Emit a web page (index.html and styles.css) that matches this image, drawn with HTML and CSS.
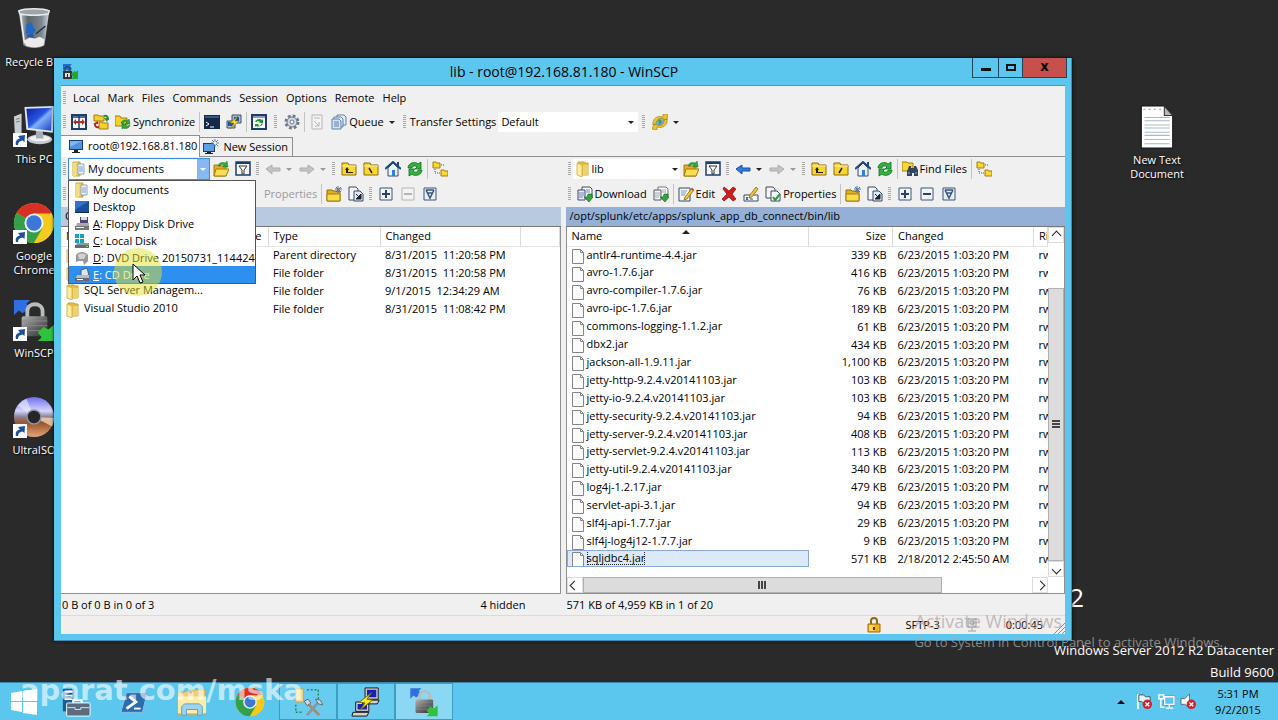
FILE: index.html
```html
<!DOCTYPE html>
<html lang="en">

<head>
    <meta charset="UTF-8">
    <meta name="viewport" content="width=device-width, initial-scale=1.0">
    <title>lib - root@192.168.81.180 - WinSCP</title>
    <link rel="stylesheet" href="styles.css">
</head>

<body>
    <svg class="sprite" aria-hidden="true">
        <defs>
            <linearGradient id="g-screen" x1="0" y1="0" x2="1" y2="1">
                <stop offset="0" stop-color="#0a1fa8"/><stop offset=".45" stop-color="#2a55e0"/><stop offset=".55" stop-color="#7fb0ff"/><stop offset="1" stop-color="#1a3cc0"/>
            </linearGradient>
            <linearGradient id="g-glass" x1="0" y1="0" x2="1" y2="0">
                <stop offset="0" stop-color="#c8d0d4"/><stop offset=".3" stop-color="#5b666c"/><stop offset=".75" stop-color="#7d888e"/><stop offset="1" stop-color="#d2d8da"/>
            </linearGradient>
            <linearGradient id="g-metal" x1="0" y1="0" x2="1" y2="1">
                <stop offset="0" stop-color="#b5b5b5"/><stop offset=".5" stop-color="#6a6a6a"/><stop offset="1" stop-color="#303030"/>
            </linearGradient>
            <linearGradient id="g-disc" x1="0" y1="0" x2="0" y2="1">
                <stop offset="0" stop-color="#6d6fe8"/><stop offset=".35" stop-color="#d4d4ff"/><stop offset=".5" stop-color="#8c8090"/><stop offset=".65" stop-color="#9a5528"/><stop offset="1" stop-color="#e0a67c"/>
            </linearGradient>
            <linearGradient id="g-folder" x1="0" y1="0" x2="1" y2="0">
                <stop offset="0" stop-color="#fff3b0"/><stop offset="1" stop-color="#dfb93c"/>
            </linearGradient>
        </defs>
        <symbol id="i-shortcut" viewBox="0 0 14 14"><rect width="14" height="14" fill="#fff"/><path d="M3 12c-1-4 1-6 4-6.500L5 3l7-1-.500 7L9.500 7.500C7 8 5 9 5 12z" fill="#1c4f9c"/></symbol>
        <symbol id="i-recycle" viewBox="0 0 44 46">
            <path d="M6 4h32l-5 36c-5 4-17 4-22 0z" fill="url(#g-glass)"/>
            <path d="M6 4c6-3 26-3 32 0l-1 3c-6 2-24 2-30 0z" fill="#9da5a8" stroke="#e6eaea" stroke-width="1.500"/>
            <path d="M14 18l6-2 1 5 3 3-4 5-3-2-4 1z" fill="#2367c4"/><path d="M15 29l6-1 1 5-6 1z" fill="#1e5bb8"/><path d="M24 28l10-8" stroke="#2a333a" stroke-width="1.500"/>
            <path d="M12 35l5-3 6 1 5-2 5 3-1 6c-5 3-15 3-19 0z" fill="#eceaea"/><path d="M8 8l4 30" stroke="#eff3f3" stroke-width="1.500"/>
        </symbol>
        <symbol id="i-pc" viewBox="0 0 44 44">
            <path d="M1 12l8-3v22l-7 2z" fill="#c9ced2"/><path d="M3 15l4-1M3 18l4-1" stroke="#70787d"/>
            <ellipse cx="28" cy="36" rx="13" ry="5" fill="#c3cace"/><ellipse cx="28" cy="35" rx="11" ry="3" fill="#eff2f4"/>
            <path d="M24 26h7l1 9h-8z" fill="#a5adb2"/><path d="M12 2l31-1-1 28-28-3z" fill="#dfe5ea"/><path d="M14 4l27-1-1 24-24-3z" fill="url(#g-screen)"/>
        </symbol>
        <symbol id="i-chrome" viewBox="0 0 44 44">
            <circle cx="22" cy="22" r="21" fill="#f3c416"/>
            <path d="M22 22L3.800 11.500A21 21 0 0 1 40.200 11.500z" fill="#d93025"/><path d="M3.800 11.500A21 21 0 0 0 22 43l10-16-10-5z" fill="#34a04a"/>
            <path d="M22 12h18.500A21 21 0 0 1 22 43l9-16z" fill="#f6ca1c"/><circle cx="22" cy="22" r="10" fill="#f2f4f2"/><circle cx="22" cy="22" r="8" fill="#3b78d8"/>
        </symbol>
        <symbol id="i-winscp" viewBox="0 0 44 46">
            <path d="M1 2h17l-4 4 4 4-8 6-4-3-5 5z" fill="#2f6fe0"/>
            <path d="M15 22v-8c0-10 16-10 16 0v8" fill="none" stroke="#b9bcbe" stroke-width="4"/><rect x="9" y="19" width="27" height="21" rx="2" fill="url(#g-metal)"/>
            <path d="M9 24h27M9 29h27M9 34h27" stroke="#8e8e8e" stroke-width=".8"/><path d="M43 45H26l4-4-4-5 6-6 5 3 6-5z" fill="#2fc23a"/>
        </symbol>
        <symbol id="i-disc" viewBox="0 0 44 44"><circle cx="22" cy="22" r="21" fill="url(#g-disc)"/><path d="M22 22L5 10A21 21 0 0 1 14 3z" fill="#eef" opacity=".6"/><path d="M22 22l19 10a21 21 0 0 0 2-9z" fill="#fde2c8" opacity=".7"/><circle cx="22" cy="22" r="8" fill="#8f94a0"/><circle cx="22" cy="22" r="6.500" fill="#26262a"/></symbol>
        <symbol id="i-textfile" viewBox="0 0 32 42"><path d="M1 1h22l8 9v31H1z" fill="#fff" stroke="#111"/><path d="M23 1v9h8z" fill="#b8b8b8" stroke="#333"/><path d="M3 4h17" stroke="#999" stroke-dasharray="2 3"/><path d="M4 12h24M4 15h24M4 19h24M4 22h24M4 26h24M4 29h24M4 33h24M4 37h24" stroke="#a8b8d0"/></symbol>

        <symbol id="i-app" viewBox="0 0 16 16"><path d="M1 0h9L8 2l2 3-3 2-4-2-2 2z" fill="#1f6ad8"/><path d="M3 7V5c0-3 5-3 5 0v2" fill="none" stroke="#444" stroke-width="1.500"/><rect x="1" y="7" width="9" height="8" fill="#333"/><path d="M3 9h5v4H3z" fill="#ddd"/><rect x="5" y="10" width="1" height="3" fill="#222"/><path d="M16 15H9l2-2-2-3 3-3 2 1 2-2z" fill="#25a52e"/></symbol>
        <symbol id="i-compare" viewBox="0 0 16 16"><path d="M1 1h14v14H1z" fill="#fff" stroke="#1d3d70" stroke-width="2"/><path d="M8 1v14M1 3h14" stroke="#1d3d70" stroke-width="1.500"/><path d="M2 8l3-3v2h6V5l3 3-3 3V9H5v2z" fill="#c42020"/></symbol>
        <symbol id="i-syncdirs" viewBox="0 0 16 16"><path d="M1 1h4l1 1h5v5H1zM6 8h3l1 1h5v6H6z" fill="#f5cf2c" stroke="#a47c10"/><path d="M11 2c3-1 4 1 4 4" fill="none" stroke="#27902f" stroke-width="2"/><path d="M11 4h5l-2 4z" fill="#27902f"/><path d="M6 13c-3 1-4-1-4-3" fill="none" stroke="#c42020" stroke-width="2"/><path d="M0 10h5v-3z" fill="#c42020"/></symbol>
        <symbol id="i-sync" viewBox="0 0 16 16"><path d="M0 2h5l1 2h6v8H0z" fill="#f5cf2c" stroke="#a47c10"/><path d="M6 9c1-3 5-4 7-2l1-2 1 5h-5l2-2c-2-1-3 0-4 2zM15 11c-1 4-5 4-7 3l-1 1v-5h4l-1 2c1 1 3 1 4-1z" fill="#31a83a" stroke="#157020" stroke-width=".5"/></symbol>
        <symbol id="i-console" viewBox="0 0 16 16"><path d="M0 1h16v14H0z" fill="#15294a"/><path d="M1 2h14v2H1z" fill="#39577f"/><path d="M2 8l3 2-3 2M6 13h4" fill="none" stroke="#fff"/></symbol>
        <symbol id="i-putty" viewBox="0 0 16 16"><path d="M6 1h9v8H6z" fill="#a9bfd8" stroke="#39516e"/><path d="M8 3h5v4H8z" fill="#1d4fa8"/><path d="M1 7h8v7H1z" fill="#a9bfd8" stroke="#39516e"/><path d="M2 8h6v4H2z" fill="#1d4fa8"/><path d="M12 2L4 9h4l-4 6 9-8H9z" fill="#ffe02a" stroke="#8d7000" stroke-width=".6"/></symbol>
        <symbol id="i-refreshdoc" viewBox="0 0 16 16"><path d="M1 1h14v14H1z" fill="#fff" stroke="#1d3d70" stroke-width="2"/><path d="M1 3h14" stroke="#1d3d70"/><path d="M4 8c1-3 5-4 7-2l1-1v4H8l1-1c-1-1-3-1-3 0zM12 9c-1 4-5 4-7 3l-1 1v-3h4l-1 1c1 1 3 1 3-1z" fill="#259130"/></symbol>
        <symbol id="i-gear" viewBox="0 0 16 16"><circle cx="8" cy="8" r="6" fill="none" stroke="#6e7a8c" stroke-width="3" stroke-dasharray="2.700 2"/><circle cx="8" cy="8" r="5" fill="#d4dae2" stroke="#6e7a8c"/><circle cx="8" cy="8" r="2" fill="#f0f0f0" stroke="#6e7a8c"/></symbol>
        <symbol id="i-queueitem" viewBox="0 0 16 16"><path d="M3 1h10v14H3z" fill="#f4f4f4" stroke="#b5b5b5"/><path d="M5 4h6M5 7l5 5M10 8v4H6" stroke="#b5b5b5" fill="none"/></symbol>
        <symbol id="i-host" viewBox="0 0 16 16"><path d="M4 2h8v8H4z" fill="#e4e4e4" stroke="#9a9a9a"/><path d="M6 4h4v3H6zM8 10v3M4 14h8" fill="none" stroke="#9a9a9a"/></symbol>
        <symbol id="i-queue" viewBox="0 0 16 16"><path d="M6 1h7l2 2v8H6z" fill="#e4eefa" stroke="#5e7fa8"/><path d="M3 3h7l2 2v8H3z" fill="#e4eefa" stroke="#5e7fa8"/><path d="M1 5h7l2 2v8H1z" fill="#d4e4f6" stroke="#5e7fa8"/><path d="M3 8h5M3 10h5M3 12h5" stroke="#5e7fa8"/></symbol>
        <symbol id="i-transfer" viewBox="0 0 16 16"><circle cx="8" cy="8" r="5" fill="#6fb3e8"/><path d="M6 5l3 1 1 3-3 2z" fill="#4d9a52"/><path d="M1 11C0 5 5 1 11 3V0l5 0-1 6-3-1C8 3 4 6 4 10zM15 5c1 6-4 10-10 8v3l-5-1 2-5 3 1c4 2 7-1 7-5z" fill="#f0c22a" stroke="#a07808" stroke-width=".6"/></symbol>
        <symbol id="i-monitor" viewBox="0 0 16 16"><path d="M1 2h14v10H1z" fill="#173d78"/><path d="M2 3h12v8H2z" fill="#4f93df"/><path d="M2 3h12L2 9z" fill="#7db7f0"/><path d="M6 12h4v2H6zM4 14h8v1H4z" fill="#222"/></symbol>
        <symbol id="i-newsession" viewBox="0 0 16 16"><path d="M0 4h12v9H0z" fill="#173d78"/><path d="M1 5h10v7H1z" fill="#5c9fe4"/><path d="M4 13h4v1H4zM2 14h8v1H2z" fill="#222"/><path d="M12 0v8M8 4h8M9 1l6 6M15 1L9 7" stroke="#5f7fa4"/><circle cx="12" cy="4" r="1.500" fill="#fff"/></symbol>
        <symbol id="i-mydocs" viewBox="0 0 16 16"><path d="M2 1h7v14H2z" fill="url(#g-folder)" stroke="#c6a238"/><path d="M7 3h6v10H7z" fill="#f2f7fd" stroke="#8fa3b8"/><path d="M8 6h4M8 8h4M8 10h4" stroke="#6d9cd0"/><path d="M2 2l3 2v12l-3-1z" fill="#f4dd7d"/></symbol>
        <symbol id="i-folder" viewBox="0 0 16 16"><path d="M3 1h6l1 1h3v12H3z" fill="#e0bc46" stroke="#caa437"/><path d="M2 2l5 2v12l-5-2z" fill="#fdeea4" stroke="#d8b850"/><path d="M8 4h5v10H8z" fill="#efd26a"/></symbol>
        <symbol id="i-desktop" viewBox="0 0 16 16"><path d="M1 2h14v12H1z" fill="#1b4f9e"/><path d="M1 2h14L1 11z" fill="#2f72c8"/><path d="M1 13h14v1H1z" fill="#0c2f68"/></symbol>
        <symbol id="i-floppy" viewBox="0 0 16 16"><path d="M6 1h8v7H6z" fill="#4b4878"/><path d="M7 1h6v3H7z" fill="#ddd"/><path d="M3 7h12v6H1z" fill="#aaa"/><path d="M1 10h14v4H1z" fill="#777"/><path d="M2 11h8v1H2z" fill="#eee"/></symbol>
        <symbol id="i-disk" viewBox="0 0 16 16"><path d="M1 1h4v4H1zM6 1h4v4H6zM1 6h4v4H1zM6 6h4v4H6z" fill="#16a2bd"/><path d="M3 10h12v4H1z" fill="#999"/><path d="M1 12h14v3H1z" fill="#667"/><path d="M12 13h2v1h-2z" fill="#5f5"/></symbol>
        <symbol id="i-dvd" viewBox="0 0 16 16"><path d="M2 5c3-4 9-4 12 0v6l-4 4-1-4H5l-3 1z" fill="#999"/><path d="M4 5c2-2 6-2 8 0l-2 4H5z" fill="#d2d2d2"/></symbol>
        <symbol id="i-cd" viewBox="0 0 16 16"><path d="M7 3l6-2 2 7-8 2z" fill="#dce4ee" stroke="#556"/><path d="M3 8h12v5H1z" fill="#bbb"/><path d="M1 11h14v3H1z" fill="#667"/><path d="M3 12h6v1H3z" fill="#fff"/></symbol>
        <symbol id="i-open" viewBox="0 0 16 16"><path d="M1 4h4l1 1h7v10H1z" fill="#e2ae22" stroke="#a47c10"/><path d="M3 8h13l-3 7H1z" fill="#fbdc56" stroke="#a47c10"/><path d="M5 5c1-4 5-4 8-3l1-2 1 6h-5l1-2c-2-1-3 0-4 1z" fill="#31a83a" stroke="#157020" stroke-width=".5"/></symbol>
        <symbol id="i-filter" viewBox="0 0 16 16"><path d="M1 1h14v13H1z" fill="#f7fafd" stroke="#1d3d70" stroke-width="1.500"/><path d="M1 2h14" stroke="#1d3d70" stroke-width="2"/><path d="M4 5h8L9 9v4H7V9z" fill="#fff" stroke="#333"/></symbol>
        <symbol id="i-back" viewBox="0 0 16 16"><path d="M1 8l6-4v3h8v3H7v3z" fill="#2f7de0" stroke="#1550a4"/></symbol>
        <symbol id="i-backoff" viewBox="0 0 16 16"><path d="M1 8l6-4v3h8v3H7v3z" fill="#c4c4c4" stroke="#adadad"/></symbol>
        <symbol id="i-fwdoff" viewBox="0 0 16 16"><path d="M15 8L9 4v3H1v3h8v3z" fill="#c4c4c4" stroke="#adadad"/></symbol>
        <symbol id="i-parent" viewBox="0 0 16 16"><path d="M1 2h6l1 2h7v10H1z" fill="#f9d630" stroke="#8f6b08"/><path d="M1 5h14" stroke="#fff2a0"/><path d="M4 9l2-3 2 3H7v2h5v1H5V9z" fill="#222"/></symbol>
        <symbol id="i-root" viewBox="0 0 16 16"><path d="M1 2h6l1 2h7v10H1z" fill="#f9d630" stroke="#8f6b08"/><path d="M1 5h14" stroke="#fff2a0"/><path d="M6 7l3 5" stroke="#222" stroke-width="1.500"/></symbol>
        <symbol id="i-rootslash" viewBox="0 0 16 16"><path d="M1 2h6l1 2h7v10H1z" fill="#f9d630" stroke="#8f6b08"/><path d="M1 5h14" stroke="#fff2a0"/><path d="M9 7l-3 5" stroke="#222" stroke-width="1.500"/></symbol>
        <symbol id="i-home" viewBox="0 0 16 16"><path d="M3 7v8h10V7L8 2z" fill="#eef3f8" stroke="#334a6c"/><path d="M0 8l8-7 8 7" fill="none" stroke="#1f4688" stroke-width="2"/><path d="M7 9h3v6H7z" fill="#2f80e0"/><path d="M12 1h2v4h-2z" fill="#1f4688"/></symbol>
        <symbol id="i-refresh" viewBox="0 0 16 16"><path d="M1 7c0-5 7-7 10-4l3-2v7H8l2-2c-2-2-5-1-5 1zM15 9c0 5-7 7-10 4l-3 2V8h6l-2 2c2 2 5 1 5-1z" fill="#35b13d" stroke="#12701c" stroke-width=".8"/></symbol>
        <symbol id="i-tree" viewBox="0 0 16 16"><path d="M1 1h3l1 1h3v5H1zM9 9h3l1 1h3v5H9z" fill="#f9d630" stroke="#a47c10"/><path d="M3 8v4h5M9 4h3" fill="none" stroke="#456" stroke-dasharray="1 1"/></symbol>
        <symbol id="i-find" viewBox="0 0 16 16"><path d="M0 1h5l1 1h5v8H0z" fill="#f9d630" stroke="#a47c10"/><path d="M6 8l1-3h2v2h3V5h2l2 4v6h-4v-3h-2v3H5v-5z" fill="#33445c"/><path d="M7 11v2M14 11v2" stroke="#9db4d0"/></symbol>
        <symbol id="i-download" viewBox="0 0 16 16"><path d="M5 1h8l2 2v9H5z" fill="#fff" stroke="#446"/><path d="M1 4h7v10H1z" fill="#e5eefa" stroke="#446"/><path d="M2 7h5M2 9h5M2 11h4M9 4h4M9 6h4" stroke="#6889b4"/><path d="M11 8h4v3h1l-4 5-5-5h3z" fill="#2fa63a" stroke="#12701c" stroke-width=".6"/></symbol>
        <symbol id="i-downloadbg" viewBox="0 0 16 16"><path d="M5 1h8l2 2v9H5z" fill="#fff" stroke="#777"/><path d="M1 4h7v10H1z" fill="#f5f5f5" stroke="#556"/><path d="M2 7h5M2 9h5M2 11h4M9 4h4M9 6h4" stroke="#9ab"/><path d="M11 8h4v3h1l-4 5-5-5h3z" fill="#2fa63a" stroke="#12701c" stroke-width=".6"/></symbol>
        <symbol id="i-edit" viewBox="0 0 16 16"><path d="M1 2h11v13H1z" fill="#f5f8fc" stroke="#334a6c"/><path d="M3 5h6M3 7h5M3 9h4" stroke="#7c98bd"/><path d="M14 2l2 2-7 9-3 1 1-3z" fill="#f3c534" stroke="#7a5a10" stroke-width=".7"/><path d="M14 2l2 2-1 1-2-2z" fill="#d0433a"/></symbol>
        <symbol id="i-delete" viewBox="0 0 16 16"><path d="M3 1l5 4 4-4 3 2-4 5 4 5-3 2-4-4-5 4-2-2 5-5-4-5z" fill="#cf1b1b" stroke="#8c0c0c" stroke-width=".7"/></symbol>
        <symbol id="i-rename" viewBox="0 0 16 16"><path d="M1 9h14v6H1z" fill="#fff" stroke="#334a6c"/><path d="M3 11l2 3M5 11l-2 3M7 13h3" stroke="#334a6c"/><path d="M13 1l2 2-6 8-3 1 1-3z" fill="#f3c534" stroke="#7a5a10" stroke-width=".7"/></symbol>
        <symbol id="i-props" viewBox="0 0 16 16"><path d="M1 1h7l2 2v9H1z" fill="#f5f8fc" stroke="#446"/><path d="M6 5h6l3 3v7H6z" fill="#f5f8fc" stroke="#446"/><path d="M8 11l2 3 5-6" fill="none" stroke="#2c9a36" stroke-width="2"/></symbol>
        <symbol id="i-newfolder" viewBox="0 0 16 16"><path d="M1 4h5l1 1h7v10H1z" fill="#e2ae22" stroke="#8f6b08"/><path d="M1 8h13v7H1z" fill="#fbdc46" stroke="#a47c10"/><path d="M12 0v7M9 3h7M10 1l5 5M15 1l-5 5" stroke="#4f6f9c"/></symbol>
        <symbol id="i-link" viewBox="0 0 16 16"><path d="M1 1h7l2 2v11H1z" fill="#f5f8fc" stroke="#446"/><path d="M6 5h6l3 3v7H6z" fill="#dfe9f5" stroke="#334a6c"/><path d="M8 8l4 4M13 8v5H8z" fill="#222" stroke="#222"/></symbol>
        <symbol id="i-plus" viewBox="0 0 16 16"><path d="M2 2h12v12H2z" fill="#f3f7fc" stroke="#3c5578"/><path d="M8 4v8M4 8h8" stroke="#2c4468" stroke-width="2"/></symbol>
        <symbol id="i-minus" viewBox="0 0 16 16"><path d="M2 2h12v12H2z" fill="#f3f7fc" stroke="#3c5578"/><path d="M4 8h8" stroke="#2c4468" stroke-width="2"/></symbol>
        <symbol id="i-minusoff" viewBox="0 0 16 16"><path d="M2 2h12v12H2z" fill="#f3f3f3" stroke="#b4b4b4"/><path d="M4 8h8" stroke="#b4b4b4" stroke-width="2"/></symbol>
        <symbol id="i-select" viewBox="0 0 16 16"><path d="M2 2h12v12H2z" fill="#e7eff8" stroke="#3c5578"/><path d="M4 4l4 8 4-8M5 7h6M4 4h8" fill="none" stroke="#3c5578" stroke-width="1.500"/></symbol>
        <symbol id="i-file" viewBox="0 0 12 16"><path d="M.500 1.500h8l3 3v11H.500z" fill="#fbfbfb" stroke="#858585"/><path d="M8.500 1.500v3h3" fill="none" stroke="#858585"/></symbol>
        <symbol id="i-lock" viewBox="0 0 14 16"><path d="M4 8V4c0-4 6-4 6 0v4" fill="none" stroke="#8a6a14" stroke-width="2"/><path d="M1 7h12v8H1z" fill="#f0b41c" stroke="#9a6c08"/><path d="M2 8h5v6H2z" fill="#fbd65a"/><path d="M6 10h2v3H6z" fill="#553a00"/></symbol>
        <symbol id="i-resize" viewBox="0 0 12 12"><path d="M1 12L12 1M5 12l7-7M9 12l3-3" stroke="#8c8c8c" fill="none"/></symbol>

        <symbol id="t-start" viewBox="0 0 26 26"><path d="M0 4l11-2v10H0zM12 2l14-2v12H12zM0 13h11v10L0 21zM12 13h14v13l-14-2z" fill="#fff"/></symbol>
        <symbol id="t-server" viewBox="0 0 32 32"><path d="M2 2h12v24H2z" fill="#1c5b93"/><path d="M4 5h8M4 9h8M4 13h8" stroke="#fff" stroke-width="1.500"/><path d="M13 18v-4h9v4" fill="none" stroke="#fff" stroke-width="2"/><rect x="6" y="17" width="25" height="14" rx="1" fill="#5d6c7c" stroke="#fff"/><path d="M7 22h8v2h6v-2h9" stroke="#dfe5ea" fill="none"/></symbol>
        <symbol id="t-ps" viewBox="0 0 32 32"><path d="M8 6h22l-5 21H2z" fill="#2b6cae" stroke="#8fc0e6"/><path d="M11 10l7 6-10 7" fill="none" stroke="#fff" stroke-width="3"/><path d="M16 23h7" stroke="#fff" stroke-width="2"/></symbol>
        <symbol id="t-explorer" viewBox="0 0 32 32"><path d="M1 5h9l2-2h18v26H1z" fill="#efcf6c" stroke="#c9a545"/><path d="M1 10h30v18H1z" fill="#fdebaa"/><path d="M4 4h3v3H4zM12 3h6v2h-6z" fill="#4c9b48"/><path d="M13 4h3v3h-3z" fill="#c44"/><path d="M5 30v-9l3-3h16l3 3v9h-5v-6H10v6z" fill="#9fd3ee" stroke="#5c9dc2"/></symbol>
        <symbol id="t-tools" viewBox="0 0 32 32"><path d="M3 2h8v14H3z" fill="#f4dd93" stroke="#c6a24a"/><path d="M15 3h12v10M3 19v8h8" fill="none" stroke="#238545" stroke-width="1.500" stroke-dasharray="2 2"/><path d="M14 16l14 14" stroke="#b98755" stroke-width="3"/><path d="M28 15L15 30" stroke="#8796a5" stroke-width="3"/><path d="M24 13l5 1 3 5-5-1zM12 15l4-2 3 4-4 3z" fill="#d0d9e2" stroke="#5b6a78"/></symbol>
        <symbol id="t-putty" viewBox="0 0 32 32"><path d="M15 1h14v12H15zM14 14h16l-2 4H12zM5 16h14v10H5zM2 27h17l-2 4H1z" fill="#d6d2c8" stroke="#111"/><path d="M17 3h10v8H17zM7 18h10v6H7z" fill="#1420b8"/><path d="M22 6L9 16l6 1-5 7 13-10-6-1z" fill="#ffe81c" stroke="#7a6c00"/></symbol>
        <symbol id="n-flag" viewBox="0 0 18 18"><path d="M2 1v16" stroke="#fff" stroke-width="2"/><path d="M3 2h5l2 2h5v7H8L6 9H3z" fill="#e7f4fb" stroke="#456"/><circle cx="12" cy="12" r="5" fill="#d8202a"/><path d="M10 10l4 4M14 10l-4 4" stroke="#fff" stroke-width="1.500"/></symbol>
        <symbol id="n-net" viewBox="0 0 18 18"><path d="M6 3h12v10H6z" fill="#246"/><path d="M7 4h10v8H7z" fill="#5bc5ee" stroke="#fff" stroke-width="1.500"/><path d="M8 16h8M12 12v4M1 2h5v4H1zM3 6v9h4" fill="none" stroke="#fff" stroke-width="1.500"/></symbol>
        <symbol id="n-sound" viewBox="0 0 18 18"><path d="M1 6h4l5-5v15l-5-4H1z" fill="#fff" stroke="#567"/><circle cx="12" cy="12" r="5" fill="#d8202a"/><path d="M10 10l4 4M14 10l-4 4" stroke="#fff" stroke-width="1.500"/></symbol>
    </svg>

    <main class="desktop">
        <ul class="desktop-icons">
            <li><svg class="big"><use href="#i-recycle"/></svg><span>Recycle Bin</span></li>
            <li><svg class="big"><use href="#i-pc"/></svg><svg class="arrow"><use href="#i-shortcut"/></svg><span>This PC</span></li>
            <li><svg class="big"><use href="#i-chrome"/></svg><svg class="arrow"><use href="#i-shortcut"/></svg><span>Google Chrome</span></li>
            <li><svg class="big"><use href="#i-winscp"/></svg><svg class="arrow"><use href="#i-shortcut"/></svg><span>WinSCP</span></li>
            <li><svg class="big"><use href="#i-disc"/></svg><svg class="arrow"><use href="#i-shortcut"/></svg><span>UltraISO</span></li>
        </ul>
        <ul class="desktop-icons desktop-icons-right">
            <li><svg class="big"><use href="#i-textfile"/></svg><span>New Text Document</span></li>
        </ul>
        <div class="wallpaper-text">2</div>
        <div class="build">Windows Server 2012 R2 Datacenter<br>Build 9600</div>

        <section class="window">
            <header class="titlebar">
                <svg class="ico"><use href="#i-app"/></svg>
                <h1>lib - root@192.168.81.180 - WinSCP</h1>
                <div class="controls">
                    <button class="min" aria-label="Minimize"><i></i></button>
                    <button class="max" aria-label="Maximize"><i></i></button>
                    <button class="close" aria-label="Close">x</button>
                </div>
            </header>

            <div class="client">
                <nav class="menubar">
                    <i class="grip"></i>
                    <button>Local</button>
                    <button>Mark</button>
                    <button>Files</button>
                    <button>Commands</button>
                    <button>Session</button>
                    <button>Options</button>
                    <button>Remote</button>
                    <button>Help</button>
                </nav>

                <div class="toolbar main-toolbar">
                    <i class="grip"></i>
                    <button class="tool" aria-label="Compare directories"><svg class="ico"><use href="#i-compare"/></svg></button>
                    <button class="tool" aria-label="Synchronize browsing"><svg class="ico"><use href="#i-syncdirs"/></svg></button>
                    <button class="tool wide"><svg class="ico"><use href="#i-sync"/></svg>Synchronize</button>
                    <i class="sep"></i>
                    <button class="tool" aria-label="Open terminal"><svg class="ico"><use href="#i-console"/></svg></button>
                    <button class="tool" aria-label="Open in PuTTY"><svg class="ico"><use href="#i-putty"/></svg></button>
                    <i class="sep"></i>
                    <button class="tool" aria-label="Keep up to date"><svg class="ico"><use href="#i-refreshdoc"/></svg></button>
                    <i class="grip"></i>
                    <button class="tool" aria-label="Preferences"><svg class="ico"><use href="#i-gear"/></svg></button>
                    <i class="sep"></i>
                    <button class="tool" aria-label="Process queue" disabled><svg class="ico"><use href="#i-queueitem"/></svg></button>
                    <button class="tool wide"><svg class="ico"><use href="#i-queue"/></svg>Queue<b class="caret"></b></button>
                    <i class="grip"></i>
                    <label for="transfer">Transfer Settings</label>
                    <div class="combo transfer">
                        <select id="transfer"><option>Default</option></select>
                        <b class="caret"></b>
                    </div>
                    <i class="grip"></i>
                    <button class="tool wide" aria-label="Transfer mode"><svg class="ico"><use href="#i-transfer"/></svg><b class="caret"></b></button>
                </div>

                <div class="tabs">
                    <button class="tab active"><svg class="ico"><use href="#i-monitor"/></svg>root@192.168.81.180</button>
                    <button class="tab"><svg class="ico"><use href="#i-newsession"/></svg>New Session</button>
                </div>

                <div class="panes">
                    <section class="pane local">
                        <div class="toolbar">
                            <i class="grip"></i>
                            <div class="combo open">
                                <svg class="ico"><use href="#i-mydocs"/></svg>
                                <select aria-label="Local drive"><option>My documents</option></select>
                                <b class="caret"></b>
                                <ul class="drives">
                                    <li><svg class="ico"><use href="#i-mydocs"/></svg>My documents</li>
                                    <li><svg class="ico"><use href="#i-desktop"/></svg>Desktop</li>
                                    <li><svg class="ico"><use href="#i-floppy"/></svg><span><u>A</u>: Floppy Disk Drive</span></li>
                                    <li><svg class="ico"><use href="#i-disk"/></svg><span><u>C</u>: Local Disk</span></li>
                                    <li><svg class="ico"><use href="#i-dvd"/></svg><span><u>D</u>: DVD Drive 20150731_114424</span></li>
                                    <li class="hover"><svg class="ico"><use href="#i-cd"/></svg><span><u>E</u>: CD Drive</span></li>
                                </ul>
                            </div>
                            <button class="tool" aria-label="Open directory"><svg class="ico"><use href="#i-open"/></svg></button>
                            <button class="tool" aria-label="Filter"><svg class="ico"><use href="#i-filter"/></svg></button>
                            <i class="grip"></i>
                            <button class="tool wide" aria-label="Back" disabled><svg class="ico"><use href="#i-backoff"/></svg><b class="caret"></b></button>
                            <button class="tool wide" aria-label="Forward" disabled><svg class="ico"><use href="#i-fwdoff"/></svg><b class="caret"></b></button>
                            <i class="grip"></i>
                            <button class="tool" aria-label="Parent directory"><svg class="ico"><use href="#i-parent"/></svg></button>
                            <button class="tool" aria-label="Root directory"><svg class="ico"><use href="#i-root"/></svg></button>
                            <button class="tool" aria-label="Home directory"><svg class="ico"><use href="#i-home"/></svg></button>
                            <button class="tool" aria-label="Refresh"><svg class="ico"><use href="#i-refresh"/></svg></button>
                            <i class="sep"></i>
                            <button class="tool" aria-label="Tree"><svg class="ico"><use href="#i-tree"/></svg></button>
                        </div>
                        <div class="toolbar actions">
                            <i class="grip"></i>
                            <button class="tool wide props" disabled>Properties</button>
                            <i class="sep"></i>
                            <button class="tool" aria-label="New directory"><svg class="ico"><use href="#i-newfolder"/></svg></button>
                            <button class="tool" aria-label="Add link"><svg class="ico"><use href="#i-link"/></svg></button>
                            <i class="grip"></i>
                            <button class="tool" aria-label="Select"><svg class="ico"><use href="#i-plus"/></svg></button>
                            <button class="tool" aria-label="Unselect" disabled><svg class="ico"><use href="#i-minusoff"/></svg></button>
                            <button class="tool" aria-label="Select all"><svg class="ico"><use href="#i-select"/></svg></button>
                        </div>
                        <div class="path">C:\</div>
                        <div class="list">
                            <table>
                                <colgroup><col class="c-name"><col class="c-size"><col class="c-type"><col class="c-changed"><col></colgroup>
                                <thead>
                                    <tr><th>Name</th><th class="num">Size</th><th>Type</th><th>Changed</th><th></th></tr>
                                </thead>
                                <tbody>
                                    <tr><td><svg class="ico"><use href="#i-folder"/></svg>..</td><td></td><td>Parent directory</td><td>8/31/2015&nbsp; 11:20:58 PM</td><td></td></tr>
                                    <tr><td><svg class="ico"><use href="#i-folder"/></svg></td><td></td><td>File folder</td><td>8/31/2015&nbsp; 11:20:58 PM</td><td></td></tr>
                                    <tr><td><svg class="ico"><use href="#i-folder"/></svg>SQL Server Managem...</td><td></td><td>File folder</td><td>9/1/2015&nbsp; 12:34:29 AM</td><td></td></tr>
                                    <tr><td><svg class="ico"><use href="#i-folder"/></svg>Visual Studio 2010</td><td></td><td>File folder</td><td>8/31/2015&nbsp; 11:08:42 PM</td><td></td></tr>
                                </tbody>
                            </table>
                        </div>
                        <div class="summary"><span>0 B of 0 B in 0 of 3</span><span>4 hidden</span></div>
                    </section>

                    <section class="pane remote">
                        <div class="toolbar">
                            <i class="grip"></i>
                            <div class="combo">
                                <svg class="ico"><use href="#i-folder"/></svg>
                                <select aria-label="Remote directory"><option>lib</option></select>
                                <b class="caret"></b>
                            </div>
                            <button class="tool" aria-label="Open directory"><svg class="ico"><use href="#i-open"/></svg></button>
                            <button class="tool" aria-label="Filter"><svg class="ico"><use href="#i-filter"/></svg></button>
                            <i class="grip"></i>
                            <button class="tool wide" aria-label="Back"><svg class="ico"><use href="#i-back"/></svg><b class="caret"></b></button>
                            <button class="tool wide" aria-label="Forward" disabled><svg class="ico"><use href="#i-fwdoff"/></svg><b class="caret"></b></button>
                            <i class="grip"></i>
                            <button class="tool" aria-label="Parent directory"><svg class="ico"><use href="#i-parent"/></svg></button>
                            <button class="tool" aria-label="Root directory"><svg class="ico"><use href="#i-rootslash"/></svg></button>
                            <button class="tool" aria-label="Home directory"><svg class="ico"><use href="#i-home"/></svg></button>
                            <button class="tool" aria-label="Refresh"><svg class="ico"><use href="#i-refresh"/></svg></button>
                            <i class="sep"></i>
                            <button class="tool wide"><svg class="ico"><use href="#i-find"/></svg>Find Files</button>
                            <i class="sep"></i>
                            <button class="tool" aria-label="Tree"><svg class="ico"><use href="#i-tree"/></svg></button>
                        </div>
                        <div class="toolbar actions">
                            <i class="grip"></i>
                            <button class="tool wide"><svg class="ico"><use href="#i-download"/></svg>Download</button>
                            <button class="tool" aria-label="Download in background"><svg class="ico"><use href="#i-downloadbg"/></svg></button>
                            <i class="sep"></i>
                            <button class="tool wide"><svg class="ico"><use href="#i-edit"/></svg>Edit</button>
                            <button class="tool" aria-label="Delete"><svg class="ico"><use href="#i-delete"/></svg></button>
                            <button class="tool" aria-label="Rename"><svg class="ico"><use href="#i-rename"/></svg></button>
                            <button class="tool wide"><svg class="ico"><use href="#i-props"/></svg>Properties</button>
                            <i class="sep"></i>
                            <button class="tool" aria-label="New directory"><svg class="ico"><use href="#i-newfolder"/></svg></button>
                            <button class="tool" aria-label="Add link"><svg class="ico"><use href="#i-link"/></svg></button>
                            <i class="grip"></i>
                            <button class="tool" aria-label="Select"><svg class="ico"><use href="#i-plus"/></svg></button>
                            <button class="tool" aria-label="Unselect"><svg class="ico"><use href="#i-minus"/></svg></button>
                            <button class="tool" aria-label="Select all"><svg class="ico"><use href="#i-select"/></svg></button>
                        </div>
                        <div class="path">/opt/splunk/etc/apps/splunk_app_db_connect/bin/lib</div>
                        <div class="list scrolled">
                            <div class="files">
                                <table>
                                    <colgroup><col class="c-name"><col class="c-size"><col class="c-changed"><col></colgroup>
                                    <thead>
                                        <tr><th class="sorted">Name</th><th class="num">Size</th><th>Changed</th><th>Rights</th></tr>
                                    </thead>
                                    <tbody>
                                        <tr><td><svg class="file"><use href="#i-file"/></svg><span>antlr4-runtime-4.4.jar</span></td><td class="num">339 KB</td><td>6/23/2015 1:03:20 PM</td><td>rw-r--r--</td></tr>
                                        <tr><td><svg class="file"><use href="#i-file"/></svg><span>avro-1.7.6.jar</span></td><td class="num">416 KB</td><td>6/23/2015 1:03:20 PM</td><td>rw-r--r--</td></tr>
                                        <tr><td><svg class="file"><use href="#i-file"/></svg><span>avro-compiler-1.7.6.jar</span></td><td class="num">76 KB</td><td>6/23/2015 1:03:20 PM</td><td>rw-r--r--</td></tr>
                                        <tr><td><svg class="file"><use href="#i-file"/></svg><span>avro-ipc-1.7.6.jar</span></td><td class="num">189 KB</td><td>6/23/2015 1:03:20 PM</td><td>rw-r--r--</td></tr>
                                        <tr><td><svg class="file"><use href="#i-file"/></svg><span>commons-logging-1.1.2.jar</span></td><td class="num">61 KB</td><td>6/23/2015 1:03:20 PM</td><td>rw-r--r--</td></tr>
                                        <tr><td><svg class="file"><use href="#i-file"/></svg><span>dbx2.jar</span></td><td class="num">434 KB</td><td>6/23/2015 1:03:20 PM</td><td>rw-r--r--</td></tr>
                                        <tr><td><svg class="file"><use href="#i-file"/></svg><span>jackson-all-1.9.11.jar</span></td><td class="num">1,100 KB</td><td>6/23/2015 1:03:20 PM</td><td>rw-r--r--</td></tr>
                                        <tr><td><svg class="file"><use href="#i-file"/></svg><span>jetty-http-9.2.4.v20141103.jar</span></td><td class="num">103 KB</td><td>6/23/2015 1:03:20 PM</td><td>rw-r--r--</td></tr>
                                        <tr><td><svg class="file"><use href="#i-file"/></svg><span>jetty-io-9.2.4.v20141103.jar</span></td><td class="num">103 KB</td><td>6/23/2015 1:03:20 PM</td><td>rw-r--r--</td></tr>
                                        <tr><td><svg class="file"><use href="#i-file"/></svg><span>jetty-security-9.2.4.v20141103.jar</span></td><td class="num">94 KB</td><td>6/23/2015 1:03:20 PM</td><td>rw-r--r--</td></tr>
                                        <tr><td><svg class="file"><use href="#i-file"/></svg><span>jetty-server-9.2.4.v20141103.jar</span></td><td class="num">408 KB</td><td>6/23/2015 1:03:20 PM</td><td>rw-r--r--</td></tr>
                                        <tr><td><svg class="file"><use href="#i-file"/></svg><span>jetty-servlet-9.2.4.v20141103.jar</span></td><td class="num">113 KB</td><td>6/23/2015 1:03:20 PM</td><td>rw-r--r--</td></tr>
                                        <tr><td><svg class="file"><use href="#i-file"/></svg><span>jetty-util-9.2.4.v20141103.jar</span></td><td class="num">340 KB</td><td>6/23/2015 1:03:20 PM</td><td>rw-r--r--</td></tr>
                                        <tr><td><svg class="file"><use href="#i-file"/></svg><span>log4j-1.2.17.jar</span></td><td class="num">479 KB</td><td>6/23/2015 1:03:20 PM</td><td>rw-r--r--</td></tr>
                                        <tr><td><svg class="file"><use href="#i-file"/></svg><span>servlet-api-3.1.jar</span></td><td class="num">94 KB</td><td>6/23/2015 1:03:20 PM</td><td>rw-r--r--</td></tr>
                                        <tr><td><svg class="file"><use href="#i-file"/></svg><span>slf4j-api-1.7.7.jar</span></td><td class="num">29 KB</td><td>6/23/2015 1:03:20 PM</td><td>rw-r--r--</td></tr>
                                        <tr><td><svg class="file"><use href="#i-file"/></svg><span>slf4j-log4j12-1.7.7.jar</span></td><td class="num">9 KB</td><td>6/23/2015 1:03:20 PM</td><td>rw-r--r--</td></tr>
                                        <tr class="selected"><td><svg class="file"><use href="#i-file"/></svg><span>sqljdbc4.jar</span></td><td class="num">571 KB</td><td>2/18/2012 2:45:50 AM</td><td>rw-r--r--</td></tr>
                                    </tbody>
                                </table>
                            </div>
                            <div class="vscroll">
                                <button class="up" aria-label="Scroll up"></button>
                                <div class="track"><div class="thumb"></div></div>
                                <button class="down" aria-label="Scroll down"></button>
                            </div>
                            <div class="hscroll">
                                <button class="left" aria-label="Scroll left"></button>
                                <div class="track"><div class="thumb"></div></div>
                                <button class="right" aria-label="Scroll right"></button>
                            </div>
                        </div>
                        <div class="summary"><span>571 KB of 4,959 KB in 1 of 20</span></div>
                    </section>
                </div>

                <footer class="statusbar">
                    <svg class="ico"><use href="#i-lock"/></svg>
                    <span class="protocol">SFTP-3</span>
                    <svg class="ico"><use href="#i-host"/></svg>
                    <span class="elapsed">0:00:45</span>
                    <svg class="resize"><use href="#i-resize"/></svg>
                </footer>
            </div>
        </section>

        <div class="halo"></div>
        <svg class="cursor" viewBox="0 0 13 21"><path d="M1 1v16l4-4 3 7 3-1-3-7h5z" fill="#fff" stroke="#000"/></svg>
        <div class="activate"><strong>Activate Windows</strong>Go to System in Control Panel to activate Windows.</div>
    </main>

    <footer class="taskbar">
        <button class="start" aria-label="Start"><svg><use href="#t-start"/></svg></button>
        <button aria-label="Server Manager"><svg><use href="#t-server"/></svg></button>
        <button aria-label="PowerShell"><svg><use href="#t-ps"/></svg></button>
        <button aria-label="File Explorer"><svg><use href="#t-explorer"/></svg></button>
        <button aria-label="Chrome"><svg><use href="#i-chrome"/></svg></button>
        <button class="running" aria-label="SQL tools"><svg><use href="#t-tools"/></svg></button>
        <button class="running" aria-label="PuTTY"><svg><use href="#t-putty"/></svg></button>
        <button class="running current" aria-label="WinSCP"><svg><use href="#i-winscp"/></svg></button>
        <div class="tray">
            <b class="caret up"></b>
            <svg><use href="#n-flag"/></svg>
            <svg><use href="#n-net"/></svg>
            <svg><use href="#n-sound"/></svg>
            <div class="clock">5:31 PM<br>9/2/2015</div>
        </div>
        <div class="watermark">aparat.com/mska</div>
    </footer>
</body>

</html>
```

FILE: styles.css
```css
:root {
    --sky: #5bc7ee;
    --face: #f0f0f0;
    --desktop: #2a2a2b;
    --line: #8e8f93;
    --text: #000;
}

* {
    margin: 0;
    padding: 0;
    box-sizing: border-box;
}

body {
    display: flex;
    flex-direction: column;
    height: 100vh;
    overflow: hidden;
    background: var(--desktop);
    color: var(--text);
    font-family: "Open Sans", "Noto Sans", sans-serif;
    font-size: 11px;
    line-height: 18px;
}

button,
select {
    border: none;
    background: none;
    color: inherit;
    font: inherit;
    white-space: nowrap;
}

ul {
    list-style: none;
}

.sprite {
    position: absolute;
    width: 0;
    height: 0;
}

.ico {
    flex: none;
    width: 16px;
    height: 16px;
}

/* desktop */
.desktop {
    position: relative;
    flex: 1;
    min-height: 0;
}

.desktop-icons {
    position: absolute;
    left: 0;
    top: 7px;
    width: 68px;
    color: #fff;
    line-height: 14px;
    text-align: center;
    text-shadow: 1px 1px 2px #000;
}

.desktop-icons li {
    position: relative;
    display: flex;
    flex-direction: column;
    align-items: center;
    gap: 4px;
    height: 97px;
}

.desktop-icons .big {
    width: 42px;
    height: 44px;
}

.desktop-icons .arrow {
    position: absolute;
    left: 13px;
    top: 29px;
    width: 14px;
    height: 14px;
}

.desktop-icons-right {
    left: auto;
    right: 87px;
    top: 105px;
}

.wallpaper-text {
    position: absolute;
    right: 194px;
    bottom: 67px;
    color: #fff;
    font-size: 26px;
    line-height: 36px;
}

.build {
    position: absolute;
    right: 4px;
    bottom: -1px;
    color: #fff;
    font-size: 13px;
    line-height: 22px;
    text-align: right;
}

.activate {
    position: absolute;
    right: 55px;
    bottom: 31px;
    color: rgba(170, 170, 170, 0.75);
    font-size: 13px;
    line-height: 18px;
    white-space: nowrap;
}

.activate strong {
    display: block;
    font-size: 18px;
    font-weight: 400;
    line-height: 24px;
}

/* window */
.window {
    position: absolute;
    left: 54px;
    right: 206px;
    top: 58px;
    bottom: 41px;
    display: flex;
    flex-direction: column;
    padding: 0 6px 6px 7px;
    background: var(--sky);
    border: 1px solid #3b8fb4;
    border-width: 0 1px 1px 0;
    box-shadow: 0 0 3px #000;
}

.titlebar {
    display: grid;
    grid-template-columns: 1fr auto 1fr;
    align-items: center;
    height: 27px;
    margin-right: -2px;
}

.titlebar .ico {
    margin-left: 1px;
}

.titlebar h1 {
    font-size: 14px;
    font-weight: 400;
}

.controls {
    display: flex;
    align-self: start;
    justify-self: end;
    height: 20px;
    border: 1px solid #23455a;
    border-top: none;
}

.controls button {
    display: flex;
    align-items: center;
    justify-content: center;
    border-right: 1px solid #23455a;
}

.controls .min {
    width: 26px;
}

.controls .min i {
    width: 10px;
    height: 3px;
    margin-top: 3px;
    background: #111;
}

.controls .max {
    width: 24px;
}

.controls .max i {
    width: 10px;
    height: 7px;
    border: 2px solid #111;
}

.controls .close {
    width: 43px;
    padding-bottom: 3px;
    border-right: none;
    background: #c8504c;
    font-size: 14px;
    font-weight: 700;
}

.client {
    display: flex;
    flex: 1;
    flex-direction: column;
    min-height: 0;
    background: var(--face);
    border-top: 1px solid #4c94b8;
}

.menubar {
    display: flex;
    align-items: center;
    height: 24px;
}

.menubar button {
    padding: 0 4px;
}

.toolbar {
    display: flex;
    align-items: center;
    height: 24px;
}

.toolbar.actions {
    height: 26px;
}

.grip {
    flex: none;
    width: 3px;
    height: 14px;
    margin: 0 3px 0 2px;
    background: repeating-linear-gradient(#a8a8a8 0 1px, transparent 1px 2px);
}

.sep {
    flex: none;
    width: 1px;
    height: 20px;
    margin: 0 1px;
    background: #c3c3c3;
}

.tool {
    display: flex;
    flex: none;
    align-items: center;
    justify-content: center;
    width: 22px;
    height: 22px;
}

.tool.wide {
    gap: 2px;
    width: auto;
    padding: 0 3px;
}

.tool:disabled {
    color: #9a9a9a;
}

.tool .caret {
    margin: 0 1px 0 3px;
}

.caret {
    flex: none;
    border: 3px solid transparent;
    border-top-color: #222;
    border-bottom: none;
}

.tool:disabled .caret {
    border-top-color: #999;
}

.caret.up {
    border: 4px solid transparent;
    border-top: none;
    border-bottom-color: #111;
}

.main-toolbar .grip {
    margin: 0 4px;
}

.main-toolbar .grip:first-child {
    margin: 0 2px;
}

.combo {
    position: relative;
    display: flex;
    flex: none;
    align-items: center;
    width: 107px;
    height: 20px;
    margin-left: -1px;
    padding: 0 2px;
    background: #fff;
}

.combo select {
    flex: 1;
    min-width: 0;
    height: 18px;
    padding-left: 1px;
    appearance: none;
    outline: none;
}

.combo.transfer {
    width: 140px;
    margin-left: 2px;
    padding-right: 4px;
}

.combo.open {
    width: 142px;
    height: 22px;
    padding-right: 0;
    border: 1px solid #3a8de0;
}

.combo.open > .caret {
    align-self: stretch;
    display: flex;
    align-items: center;
    width: 12px;
    border: none;
    background: #86b9f2;
}

.combo.open > .caret::before {
    content: "";
    margin-left: 3px;
    border: 3px solid transparent;
    border-top-color: #fff;
    border-bottom: none;
}

.drives {
    position: absolute;
    left: -1px;
    top: 21px;
    z-index: 2;
    width: 188px;
    background: #fff;
    border: 1px solid #555;
}

.drives li {
    display: flex;
    align-items: center;
    gap: 3px;
    height: 17px;
    padding-left: 5px;
    white-space: nowrap;
}

.drives .hover {
    background: #2d8fef;
    color: #fff;
}

/* session tabs */
.tabs {
    display: flex;
    align-items: flex-end;
    height: 23px;
    border-bottom: 1px solid var(--line);
}

.tab {
    display: flex;
    align-items: center;
    gap: 4px;
    height: 19px;
    padding: 0 4px 0 3px;
    border: 1px solid var(--line);
    border-width: 1px 1px 0 0;
}

.tab.active {
    height: 22px;
    margin-bottom: -1px;
    padding: 0 2px 2px 7px;
    background: #fff;
}

/* panes */
.panes {
    display: grid;
    grid-template-columns: 1fr 1fr;
    gap: 5px;
    flex: 1;
    min-height: 0;
}

.pane {
    display: flex;
    flex-direction: column;
    min-width: 0;
    min-height: 0;
}

.props {
    margin-left: 192px;
}

.path {
    height: 20px;
    padding: 0 4px;
    border-bottom: 1px solid #777;
    background: #b8cadd;
}

.remote .path {
    background: #94b0d6;
}

.list {
    flex: 1;
    min-height: 0;
    overflow: hidden;
    background: #fff;
    border: 1px solid var(--line);
    border-top: none;
}

.local .list {
    border-left: none;
}

.list table {
    width: 100%;
    table-layout: fixed;
    border-collapse: collapse;
}

.list th,
.list td {
    height: 18px;
    padding-left: 5px;
    overflow: hidden;
    font-weight: 400;
    text-align: left;
    white-space: nowrap;
    line-height: 16px;
}

.list th {
    height: 19px;
    border-right: 1px solid #ddd;
    border-bottom: 1px solid #e4e4e4;
}

.list tr:nth-child(6n) td {
    height: 17px;
}

.list .num {
    padding-right: 6px;
    text-align: right;
}

.list td svg {
    margin-right: 3px;
    vertical-align: middle;
}

.list td .file {
    width: 12px;
    height: 16px;
}

.local .c-name {
    width: 147px;
}

.local .c-size {
    width: 60px;
}

.local .c-type {
    width: 112px;
}

.local .c-changed {
    width: 140px;
}

.local td:first-child {
    padding-left: 4px;
}

.remote .c-name {
    width: 242px;
}

.remote .c-size {
    width: 84px;
}

.remote .c-changed {
    width: 141px;
}

.sorted {
    position: relative;
}

.sorted::after {
    content: "";
    position: absolute;
    left: 48%;
    top: 3px;
    border: 4px solid transparent;
    border-top: none;
    border-bottom-color: #222;
}

.selected td:first-child {
    background: #dce9fa;
    outline: 1px solid #88a8d8;
    outline-offset: -1px;
}

.selected td:first-child span {
    outline: 1px dotted #222;
    outline-offset: -1px;
}

.scrolled {
    display: grid;
    grid-template-columns: 1fr 16px;
    grid-template-rows: 1fr 16px;
}

.files {
    min-width: 0;
    min-height: 0;
    overflow: hidden;
}

.vscroll,
.hscroll {
    display: flex;
    background: #fff;
}

.vscroll {
    flex-direction: column;
}

.vscroll button,
.hscroll button {
    display: flex;
    align-items: center;
    justify-content: center;
    width: 16px;
    height: 16px;
    border: 1px solid #ddd;
}

.vscroll button::before,
.hscroll button::before {
    content: "";
    width: 6px;
    height: 6px;
    border: 1px solid #222;
    border-width: 1px 0 0 1px;
    transform: rotate(45deg);
}

.vscroll .down::before {
    transform: rotate(225deg);
}

.hscroll .left::before {
    transform: rotate(-45deg);
}

.hscroll .right::before {
    transform: rotate(135deg);
}

.track {
    display: flex;
    flex: 1;
}

.thumb {
    display: flex;
    align-items: center;
    justify-content: center;
    background: #dcdcdc;
    border: 1px solid #b0b0b0;
}

.thumb::before {
    content: "";
    width: 8px;
    height: 8px;
}

.vscroll .track {
    align-items: flex-end;
}

.vscroll .thumb {
    width: 100%;
    height: 86%;
}

.vscroll .thumb::before {
    background: repeating-linear-gradient(#444 0 2px, transparent 2px 3px);
}

.hscroll .thumb {
    width: 80%;
}

.hscroll .thumb::before {
    background: repeating-linear-gradient(90deg, #444 0 2px, transparent 2px 3px);
}

.summary {
    display: flex;
    justify-content: space-between;
    align-items: center;
    height: 21px;
    padding: 0 35px 0 1px;
}

.statusbar {
    display: flex;
    align-items: center;
    justify-content: flex-end;
    height: 19px;
    border-top: 1px solid #dadada;
    background: #f2eeee;
}

.protocol {
    margin: 0 24px;
}

.elapsed {
    margin: 0 10px 0 26px;
}

.resize {
    align-self: flex-end;
    width: 12px;
    height: 12px;
}

/* pointer */
.halo {
    position: absolute;
    left: 114px;
    top: 248px;
    z-index: 3;
    width: 48px;
    height: 48px;
    border-radius: 50%;
    background: rgba(226, 226, 50, 0.5);
}

.cursor {
    position: absolute;
    left: 132px;
    top: 263px;
    z-index: 3;
    width: 13px;
    height: 21px;
}

/* taskbar */
.taskbar {
    position: relative;
    display: flex;
    height: 38px;
    background: var(--sky);
    border-top: 1px solid #3a86aa;
}

.taskbar button {
    display: flex;
    align-items: center;
    justify-content: center;
    width: 58px;
}

.taskbar button svg {
    width: 30px;
    height: 30px;
}

.taskbar .start {
    width: 47px;
}

.taskbar .start svg {
    width: 26px;
    height: 26px;
}

.taskbar .running {
    border: 1px solid #3f9dc4;
    background: #68cbf0;
}

.taskbar .current {
    background: #8ad8f4;
}

.tray {
    display: flex;
    align-items: center;
    gap: 5px;
    margin-left: auto;
}

.tray svg {
    width: 17px;
    height: 17px;
}

.tray .caret {
    margin-right: 6px;
}

.clock {
    width: 72px;
    margin-right: 4px;
    line-height: 16px;
    text-align: center;
}

.watermark {
    position: absolute;
    left: 20px;
    top: -9px;
    color: rgba(255, 255, 255, 0.6);
    font-family: "DejaVu Sans", sans-serif;
    font-size: 29px;
    font-weight: 700;
    line-height: 32px;
}
```
